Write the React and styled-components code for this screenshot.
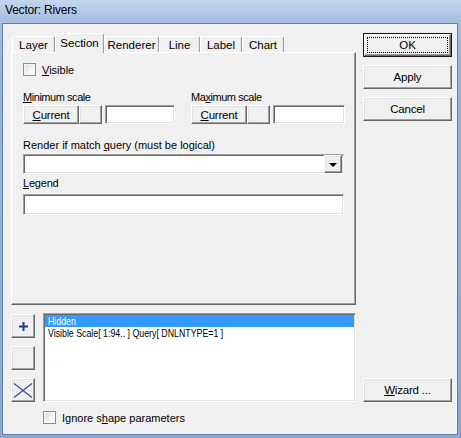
import styled, { createGlobalStyle } from "styled-components";

const GlobalStyle = createGlobalStyle`
  html, body {
    margin: 0;
    padding: 0;
    background: #ffffff;
  }
  body {
    font-family: "Liberation Sans", Arial, sans-serif;
    font-size: 11px;
    color: #000000;
  }
`;

const Window = styled.div`
  width: 461px;
  height: 438px;
  box-sizing: border-box;
  display: flex;
  flex-direction: column;
  padding: 0 3px 3px 2px;
  background: linear-gradient(180deg, #c3d5ed 0px, #a9c2e3 18px, #97b3da 60px, #89a8d3 100%);
`;

const TitleBar = styled.div`
  height: 23px;
  display: flex;
  align-items: center;
  padding: 0 0 3px 3px;
  box-sizing: border-box;
  font-size: 12px;
  letter-spacing: -0.2px;
  color: #000000;
`;

const Body = styled.div`
  flex: 1;
  background: #f0f0f0;
  border: 1px solid #5f80b0;
  padding: 9px 4px 0 8px;
  display: flex;
  flex-direction: column;
`;

const TopRow = styled.div`
  display: flex;
  align-items: flex-start;
  gap: 7px;
`;

const TabArea = styled.div`
  width: 345px;
  display: flex;
  flex-direction: column;
`;

const TabStrip = styled.div`
  height: 19px;
  display: flex;
  align-items: flex-end;
  padding-left: 1px;
`;

const Tab = styled.div`
  width: ${p => p.$w}px;
  height: ${p => (p.$active ? 20 : 16)}px;
  margin-bottom: ${p => (p.$active ? -1 : 0)}px;
  position: relative;
  z-index: ${p => (p.$active ? 1 : 0)};
  box-sizing: border-box;
  background: #f0f0f0;
  border-top: 1px solid #ffffff;
  border-left: 1px solid #ffffff;
  border-right: 1px solid #a0a0a0;
  box-shadow: inset -1px 0 #e3e3e3;
  border-radius: 2px 2px 0 0;
  display: flex;
  justify-content: center;
  align-items: ${p => (p.$active ? "flex-start" : "center")};
  padding-top: ${p => (p.$active ? 3 : 0)}px;
  font-size: 11.5px;
  white-space: nowrap;
`;

const Panel = styled.div`
  height: 253px;
  box-sizing: border-box;
  border-top: 1px solid #ffffff;
  border-left: 1px solid #ffffff;
  border-right: 1px solid #696969;
  border-bottom: 1px solid #696969;
  box-shadow: inset -1px -1px #a0a0a0;
  padding: 10px 11px 0 11px;
  display: flex;
  flex-direction: column;
`;

const CheckRow = styled.label`
  display: flex;
  align-items: center;
  height: 13px;
  gap: 6px;
`;

const CheckBox = styled.span`
  width: 13px;
  height: 13px;
  box-sizing: border-box;
  border: 1px solid #8e8f8f;
  background: linear-gradient(135deg, #dcdcdc 0%, #f6f6f6 60%, #ffffff 100%);
  box-shadow: inset 0 0 0 1px #f4f4f4;
  flex-shrink: 0;
`;

const Mn = styled.span`
  text-decoration: underline;
`;

const ScaleRow = styled.div`
  display: flex;
  gap: 16px;
  margin-top: 15px;
`;

const ScaleGroup = styled.div`
  display: flex;
  flex-direction: column;
  gap: 1px;
`;

const FieldLabel = styled.div`
  height: 13px;
  line-height: 13px;
  letter-spacing: ${p => p.$ls ?? -0.2}px;
  margin-top: ${p => p.$mt || 0}px;
`;

const ControlRow = styled.div`
  display: flex;
  align-items: center;
`;

const RaisedButton = styled.div`
  width: ${p => p.$w}px;
  height: ${p => p.$h}px;
  box-sizing: border-box;
  background: #f0f0f0;
  border: 1px solid;
  border-color: #ffffff #696969 #696969 #ffffff;
  box-shadow: inset -1px -1px #a0a0a0, inset 1px 1px #e3e3e3;
  display: flex;
  align-items: center;
  justify-content: center;
  font-size: 11.5px;
  letter-spacing: -0.2px;
  flex-shrink: 0;
`;

const DefaultButton = styled.div`
  width: 89px;
  height: 24px;
  box-sizing: border-box;
  border: 1px solid #1a1a1a;
  background: #f0f0f0;
  display: flex;
  font-size: 11.5px;
  & > div {
    flex: 1;
    border: 1px solid;
    border-color: #ffffff #696969 #696969 #ffffff;
    box-shadow: inset -1px -1px #a0a0a0;
    display: flex;
    padding: 2px;
  }
  & span {
    flex: 1;
    border: 1px dotted #000000;
    display: flex;
    align-items: center;
    justify-content: center;
  }
`;

const TextBox = styled.div`
  width: ${p => p.$w}px;
  height: ${p => p.$h}px;
  margin-left: ${p => p.$ml || 0}px;
  margin-top: ${p => p.$mt || 0}px;
  box-sizing: border-box;
  background: #ffffff;
  border: 1px solid;
  border-color: #a0a0a0 #ffffff #ffffff #a0a0a0;
  box-shadow: inset 1px 1px #696969, inset -1px -1px #e3e3e3;
  flex-shrink: 0;
`;

const Combo = styled(TextBox)`
  display: flex;
  justify-content: flex-end;
  align-items: center;
  padding: 1px 1px 1px 0;
`;

const ArrowButton = styled(RaisedButton)`
  &::after {
    content: "";
    border-left: 4px solid transparent;
    border-right: 4px solid transparent;
    border-top: 4px solid #000000;
    margin-top: 1px;
  }
`;

const ButtonColumn = styled.div`
  display: flex;
  flex-direction: column;
  gap: 8px;
`;

const BottomRow = styled.div`
  display: flex;
  align-items: flex-end;
  margin-top: 8px;
`;

const ToolColumn = styled.div`
  display: flex;
  flex-direction: column;
  gap: 8px;
`;

const ListBox = styled.div`
  width: 313px;
  height: 89px;
  margin-left: 8px;
  margin-right: 7px;
  box-sizing: border-box;
  background: #ffffff;
  border: 1px solid;
  border-color: #a0a0a0 #ffffff #ffffff #a0a0a0;
  box-shadow: inset 1px 1px #696969, inset -1px -1px #e3e3e3;
  padding: 1px 1px 1px 1px;
  font-size: 11px;
`;

const ListItem = styled.div`
  height: 12px;
  line-height: 12px;
  padding-left: 3px;
  white-space: nowrap;
  background: ${p => (p.$selected ? "#3399ff" : "transparent")};
  color: ${p => (p.$selected ? "#ffffff" : "#000000")};
  & > span {
    display: inline-block;
    transform: scaleX(0.8);
    transform-origin: left center;
  }
`;

const FooterRow = styled(CheckRow)`
  margin-top: 9px;
  padding-left: 32px;
`;

const tabs = [
  { name: "Layer", w: 43 },
  { name: "Section", w: 49, active: true },
  { name: "Renderer", w: 55 },
  { name: "Line", w: 41 },
  { name: "Label", w: 42 },
  { name: "Chart", w: 42 },
];

function PlusIcon() {
  return (
    <svg width="9" height="9" viewBox="0 0 9 9">
      <path d="M4.5 0v9M0 4.5h9" stroke="#1c3b8c" strokeWidth="2" />
    </svg>
  );
}

function CrossIcon() {
  return (
    <svg width="20" height="15" viewBox="0 0 20 15">
      <path d="M1 0.5L19 14.5M19 0.5L1 14.5" stroke="#2b55a6" strokeWidth="1.3" />
    </svg>
  );
}

function ScaleControls({ label, inputW }) {
  return (
    <ScaleGroup>
      <FieldLabel $ls={-0.45}>{label}</FieldLabel>
      <ControlRow>
        <RaisedButton $w={56} $h={19}><Mn>C</Mn>urrent</RaisedButton>
        <RaisedButton $w={23} $h={19} />
        <TextBox $w={inputW} $h={19} $ml={3} />
      </ControlRow>
    </ScaleGroup>
  );
}

export default function App() {
  return (
    <>
      <GlobalStyle />
      <Window>
        <TitleBar>Vector: Rivers</TitleBar>
        <Body>
          <TopRow>
            <TabArea>
              <TabStrip>
                {tabs.map(t => (
                  <Tab key={t.name} $w={t.w} $active={t.active}>{t.name}</Tab>
                ))}
              </TabStrip>
              <Panel>
                <CheckRow>
                  <CheckBox />
                  <span><Mn>V</Mn>isible</span>
                </CheckRow>
                <ScaleRow>
                  <ScaleControls label={<><Mn>M</Mn>inimum scale</>} inputW={70} />
                  <ScaleControls label={<>Ma<Mn>x</Mn>imum scale</>} inputW={72} />
                </ScaleRow>
                <FieldLabel $mt={15} $ls={0}>Render if match <Mn>q</Mn>uery (must be logical)</FieldLabel>
                <Combo $w={321} $h={20} $mt={2}>
                  <ArrowButton $w={18} $h={18} />
                </Combo>
                <FieldLabel $mt={3}><Mn>L</Mn>egend</FieldLabel>
                <TextBox $w={321} $h={21} $mt={4} />
              </Panel>
            </TabArea>
            <ButtonColumn>
              <DefaultButton><div><span>OK</span></div></DefaultButton>
              <RaisedButton $w={89} $h={24}>Apply</RaisedButton>
              <RaisedButton $w={89} $h={24}>Cancel</RaisedButton>
            </ButtonColumn>
          </TopRow>
          <BottomRow>
            <ToolColumn>
              <RaisedButton $w={24} $h={24}><PlusIcon /></RaisedButton>
              <RaisedButton $w={24} $h={24} />
              <RaisedButton $w={24} $h={24}><CrossIcon /></RaisedButton>
            </ToolColumn>
            <ListBox>
              <ListItem $selected><span>Hidden</span></ListItem>
              <ListItem><span>Visible Scale[ 1:94.. ] Query[ DNLNTYPE=1 ]</span></ListItem>
            </ListBox>
            <RaisedButton $w={89} $h={24}><Mn>W</Mn>izard ...</RaisedButton>
          </BottomRow>
          <FooterRow>
            <CheckBox />
            <span>Ignore s<Mn>h</Mn>ape parameters</span>
          </FooterRow>
        </Body>
      </Window>
    </>
  );
}
